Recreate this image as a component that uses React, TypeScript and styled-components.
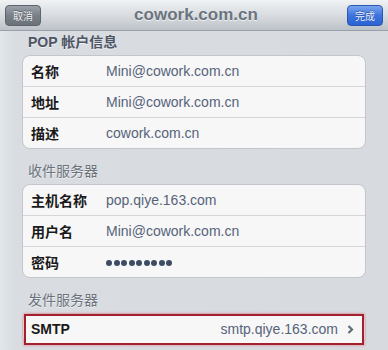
import styled, { createGlobalStyle } from 'styled-components';

const GlobalStyle = createGlobalStyle`
  html, body {
    margin: 0;
    padding: 0;
    width: 388px;
    height: 350px;
    overflow: hidden;
    background: #d7dbe0;
  }
  * {
    box-sizing: border-box;
  }
`;

const Screen = styled.div`
  width: 388px;
  height: 350px;
  overflow: hidden;
  font-family: 'Liberation Sans', 'Noto Sans CJK SC', sans-serif;
  background: linear-gradient(90deg, #e1e7ed 0px, #d9dde2 14px, #d7dbe0 100%);
`;

const NavBar = styled.div`
  height: 31px;
  display: flex;
  align-items: center;
  justify-content: space-between;
  padding: 0 5px;
  background: linear-gradient(180deg, #f0f2f4 0%, #d6dade 55%, #bcc2c9 100%);
  border-bottom: 1px solid #9aa0a7;
`;

const NavButton = styled.div<{ $primary?: boolean }>`
  height: 21px;
  padding: 0 7px;
  display: flex;
  align-items: center;
  border-radius: 4px;
  font-size: 10px;
  color: rgba(255, 255, 255, 0.9);
  border: 1px solid ${(p) => (p.$primary ? '#2a58b0' : '#5d636b')};
  background: ${(p) =>
    p.$primary
      ? 'linear-gradient(180deg, #7aa6f0 0%, #3d74de 50%, #2a62d2 100%)'
      : 'linear-gradient(180deg, #9ba1a8 0%, #7a8088 50%, #6c727a 100%)'};
  text-shadow: 0 -1px 0 rgba(0, 0, 0, 0.3);
`;

const NavTitle = styled.div`
  font-size: 17px;
  font-weight: 700;
  color: #6b747e;
  text-shadow: 0 1px 0 rgba(255, 255, 255, 0.7);
  margin-left: 4px;
`;

const Section = styled.div<{ $first?: boolean }>`
  margin-top: ${(p) => (p.$first ? '1px' : '12px')};
  padding: 0 22px;
  position: relative;
`;

const SectionHeader = styled.div<{ $strong?: boolean }>`
  line-height: 20px;
  height: 20px;
  margin-bottom: 3px;
  padding-left: 6px;
  font-size: 14px;
  font-weight: ${(p) => (p.$strong ? 700 : 400)};
  color: ${(p) => (p.$strong ? '#4d5564' : '#6c737c')};
  text-shadow: 0 1px 0 rgba(255, 255, 255, 0.6);
`;

const Card = styled.div`
  background: #f7f7f7;
  border: 1px solid #c3c7cd;
  border-radius: 8px;
  overflow: hidden;
`;

const Row = styled.div`
  height: 31px;
  display: flex;
  align-items: center;
  padding: 0 8px;
  border-top: 1px solid #d4d6d9;
  &:first-child {
    border-top: none;
    height: 30px;
  }
`;

const Label = styled.div`
  width: 75px;
  flex-shrink: 0;
  font-size: 14px;
  font-weight: 700;
  color: #1a1a1a;
`;

const Value = styled.div`
  font-size: 14px;
  color: #56637a;
`;

const Dots = styled.div`
  display: flex;
  gap: 1.5px;
  padding-top: 2px;
`;

const Dot = styled.span`
  width: 6px;
  height: 6px;
  border-radius: 50%;
  background: #3d4b63;
`;

const RightValue = styled.div`
  flex: 1;
  text-align: right;
  font-size: 14px;
  color: #56637a;
  margin-right: 9px;
`;

const Chevron = styled.svg`
  width: 7px;
  height: 9px;
  margin-right: 3px;
`;

const Highlight = styled.div`
  position: absolute;
  left: 24px;
  right: 24px;
  bottom: 0px;
  height: 31px;
  border: 2px solid #a3202f;
  box-shadow: 0 0 2px 1px rgba(230, 150, 160, 0.7);
  pointer-events: none;
`;

const popRows = [
  { label: '名称', value: 'Mini@cowork.com.cn' },
  { label: '地址', value: 'Mini@cowork.com.cn' },
  { label: '描述', value: 'cowork.com.cn' },
];

const inRows = [
  { label: '主机名称', value: 'pop.qiye.163.com' },
  { label: '用户名', value: 'Mini@cowork.com.cn' },
];

export default function App() {
  return (
    <Screen>
      <GlobalStyle />
      <NavBar>
        <NavButton>取消</NavButton>
        <NavTitle>cowork.com.cn</NavTitle>
        <NavButton $primary>完成</NavButton>
      </NavBar>

      <Section $first>
        <SectionHeader $strong>POP 帐户信息</SectionHeader>
        <Card>
          {popRows.map((r) => (
            <Row key={r.label}>
              <Label>{r.label}</Label>
              <Value>{r.value}</Value>
            </Row>
          ))}
        </Card>
      </Section>

      <Section>
        <SectionHeader>收件服务器</SectionHeader>
        <Card>
          {inRows.map((r) => (
            <Row key={r.label}>
              <Label>{r.label}</Label>
              <Value>{r.value}</Value>
            </Row>
          ))}
          <Row>
            <Label>密码</Label>
            <Dots aria-label="password">
              {Array.from({ length: 9 }).map((_, i) => (
                <Dot key={i} />
              ))}
            </Dots>
          </Row>
        </Card>
      </Section>

      <Section>
        <SectionHeader>发件服务器</SectionHeader>
        <Card>
          <Row>
            <Label>SMTP</Label>
            <RightValue>smtp.qiye.163.com</RightValue>
            <Chevron viewBox="0 0 7 9">
              <path d="M1.5 1 L5 4.5 L1.5 8" fill="none" stroke="#656c76" strokeWidth="2.2" />
            </Chevron>
          </Row>
        </Card>
        <Highlight />
      </Section>
    </Screen>
  );
}
